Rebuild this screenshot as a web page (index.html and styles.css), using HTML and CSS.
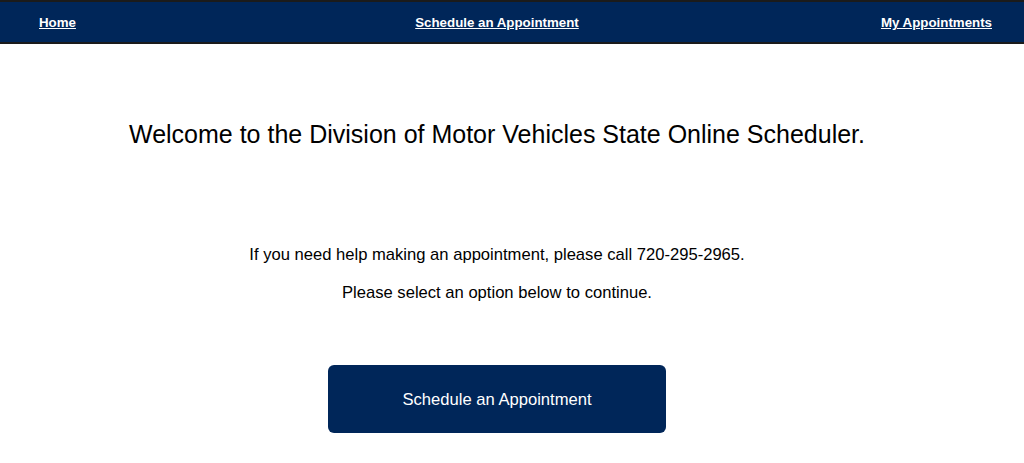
FILE: index.html
```html
<!DOCTYPE html>
<html lang="en">
<head>
<meta charset="utf-8">
<title>DMV Online Scheduler</title>
<link rel="stylesheet" href="styles.css">
</head>
<body>
<nav class="topnav">
  <div class="nav-inner">
    <div class="nav-cell nav-left"><a href="#" class="nav-link">Home</a></div>
    <div class="nav-cell nav-mid"><a href="#" class="nav-link">Schedule an Appointment</a></div>
    <div class="nav-cell nav-right"><a href="#" class="nav-link">My Appointments</a></div>
  </div>
</nav>
<main class="content">
  <h1 class="welcome">Welcome to the Division of Motor Vehicles State Online Scheduler.</h1>
  <p class="info first">If you need help making an appointment, please call 720-295-2965.</p>
  <p class="info">Please select an option below to continue.</p>
  <div class="actions">
    <a href="#" class="btn">Schedule an Appointment</a>
  </div>
</main>
</body>
</html>
```
FILE: styles.css
```css
html, body {
  margin: 0;
  padding: 0;
  background: #fff;
  font-family: "Liberation Sans", Arial, sans-serif;
  color: #000;
}
.topnav {
  background: #002659;
  border-top: 2px solid #1b1b1b;
  border-bottom: 2px solid #1b1b1b;
  height: 40px;
  padding-top: 0;
}
.nav-inner {
  width: 994px;
  height: 100%;
  display: grid;
  grid-template-columns: 1fr 1fr 1fr;
  align-items: center;
}
.nav-left { padding-left: 39px; }
.nav-mid { text-align: center; }
.nav-right { text-align: right; padding-right: 2px; }
.nav-link {
  color: #fff;
  font-weight: bold;
  font-size: 13.3px;
  text-decoration: underline;
}
.content {
  width: 994px;
  text-align: center;
}
.welcome {
  margin: 0;
  padding-top: 76px;
  font-size: 25px;
  font-weight: normal;
  line-height: 28px;
}
.info {
  margin: 0;
  font-size: 16.6px;
  line-height: 20px;
}
.info.first { margin-top: 97px; }
.info + .info { margin-top: 18px; }
.actions {
  margin-top: 62px;
  display: flex;
  justify-content: center;
}
.btn {
  display: flex;
  align-items: center;
  justify-content: center;
  width: 338px;
  height: 68px;
  border-radius: 6px;
  background: #002659;
  color: #fff;
  font-size: 16.6px;
  text-decoration: none;
  padding-top: 1px;
  box-sizing: border-box;
}
```
